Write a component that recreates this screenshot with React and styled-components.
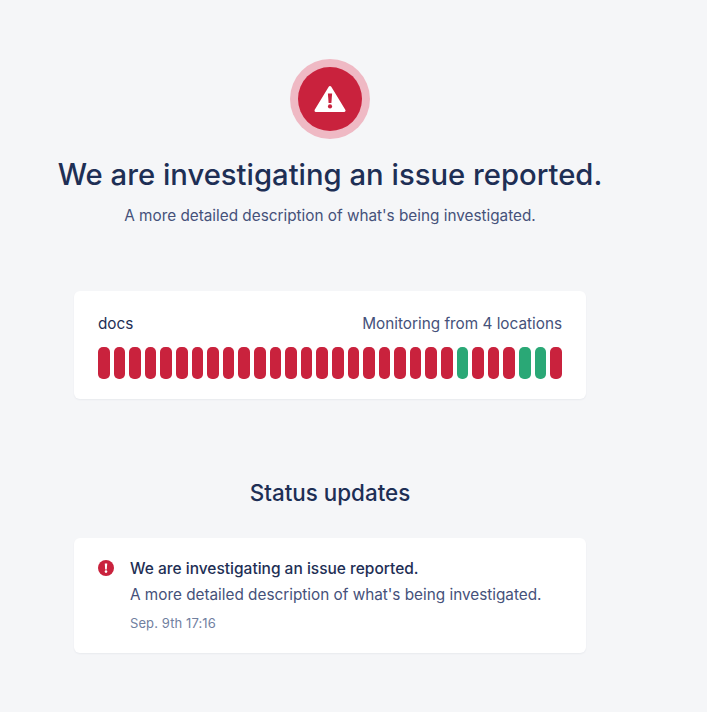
import React from 'react'
import styled, { createGlobalStyle } from 'styled-components'

const GlobalStyle = createGlobalStyle`
  html, body {
    margin: 0;
    padding: 0;
    background: #f5f6f8;
  }
  body {
    font-family: Inter, "Liberation Sans", sans-serif;
    color: #1e2f55;
  }
`

const Page = styled.div`
  width: 660px;
  min-height: 712px;
  box-sizing: border-box;
  padding-top: 59px;
  display: flex;
  flex-direction: column;
  align-items: center;
`

const Halo = styled.div`
  width: 80px;
  height: 80px;
  border-radius: 50%;
  background: #efb9c4;
  display: flex;
  align-items: center;
  justify-content: center;
`

const Badge = styled.div`
  width: 64px;
  height: 64px;
  border-radius: 50%;
  background: #c9223d;
  display: flex;
  align-items: center;
  justify-content: center;
`

const Title = styled.h1`
  margin: 17px 0 0;
  font-size: 29.25px;
  line-height: 38px;
  font-weight: 500;
  color: #1e2f55;
  white-space: nowrap;
`

const Subtitle = styled.p`
  margin: 10px 0 0;
  font-size: 15.3px;
  line-height: 24px;
  color: #45517a;
`

const Card = styled.div`
  width: 512px;
  box-sizing: border-box;
  background: #fff;
  border-radius: 6px;
  box-shadow: 0 1px 2px rgba(31, 45, 81, 0.06);
`

const MonitorCard = styled(Card)`
  margin-top: 63px;
  padding: 21px 24px 20px;
`

const MonitorHead = styled.div`
  display: flex;
  justify-content: space-between;
  align-items: center;
  font-size: 15.3px;
  line-height: 24px;
`

const MonitorName = styled.span`
  color: #1e2f55;
`

const MonitorMeta = styled.span`
  color: #45517a;
`

const Bars = styled.div`
  margin-top: 11px;
  display: flex;
  gap: 4px;
  height: 32px;
`

const Bar = styled.div`
  flex: 1;
  border-radius: 5px;
  background: ${p => (p.$up ? '#2aa876' : '#c9223d')};
`

const SectionTitle = styled.h2`
  margin: 78px 0 0;
  font-size: 22.4px;
  line-height: 32px;
  font-weight: 500;
  color: #1e2f55;
`

const UpdateCard = styled(Card)`
  margin-top: 29px;
  padding: 18px 24px 20px;
  display: flex;
  gap: 16px;
`

const UpdateIcon = styled.svg`
  flex: none;
  margin-top: 4px;
`

const UpdateBody = styled.div`
  display: flex;
  flex-direction: column;
`

const UpdateTitle = styled.div`
  font-size: 15.5px;
  line-height: 26px;
  font-weight: 500;
  color: #1e2f55;
`

const UpdateText = styled.div`
  font-size: 15.3px;
  line-height: 26px;
  color: #45517a;
`

const UpdateTime = styled.div`
  margin-top: 5px;
  font-size: 13px;
  line-height: 20px;
  letter-spacing: 0.1px;
  color: #71809f;
`

const upBars = [23, 27, 28]
const bars = Array.from({ length: 30 }, (_, i) => upBars.includes(i))

export default function App() {
  return (
    <>
      <GlobalStyle />
      <Page>
        <Halo>
          <Badge>
            <svg width="32" height="28" viewBox="0 0 32 28">
              <path
                d="M16 2.5 L30 25.5 H2 Z"
                fill="#fff"
                stroke="#fff"
                strokeWidth="3"
                strokeLinejoin="round"
              />
              <path d="M13.9 8.5 H18.1 L17.4 18 H14.6 Z" fill="#c9223d" />
              <circle cx="16" cy="21.4" r="2.1" fill="#c9223d" />
            </svg>
          </Badge>
        </Halo>
        <Title>We are investigating an issue reported.</Title>
        <Subtitle>A more detailed description of what's being investigated.</Subtitle>
        <MonitorCard>
          <MonitorHead>
            <MonitorName>docs</MonitorName>
            <MonitorMeta>Monitoring from 4 locations</MonitorMeta>
          </MonitorHead>
          <Bars>
            {bars.map((up, i) => (
              <Bar key={i} $up={up} />
            ))}
          </Bars>
        </MonitorCard>
        <SectionTitle>Status updates</SectionTitle>
        <UpdateCard>
          <UpdateIcon width="16" height="16" viewBox="0 0 16 16">
            <circle cx="8" cy="8" r="8" fill="#c9223d" />
            <path d="M6.8 3.5 H9.2 L8.8 9.5 H7.2 Z" fill="#fff" />
            <circle cx="8" cy="11.6" r="1.3" fill="#fff" />
          </UpdateIcon>
          <UpdateBody>
            <UpdateTitle>We are investigating an issue reported.</UpdateTitle>
            <UpdateText>A more detailed description of what's being investigated.</UpdateText>
            <UpdateTime>Sep. 9th 17:16</UpdateTime>
          </UpdateBody>
        </UpdateCard>
      </Page>
    </>
  )
}
